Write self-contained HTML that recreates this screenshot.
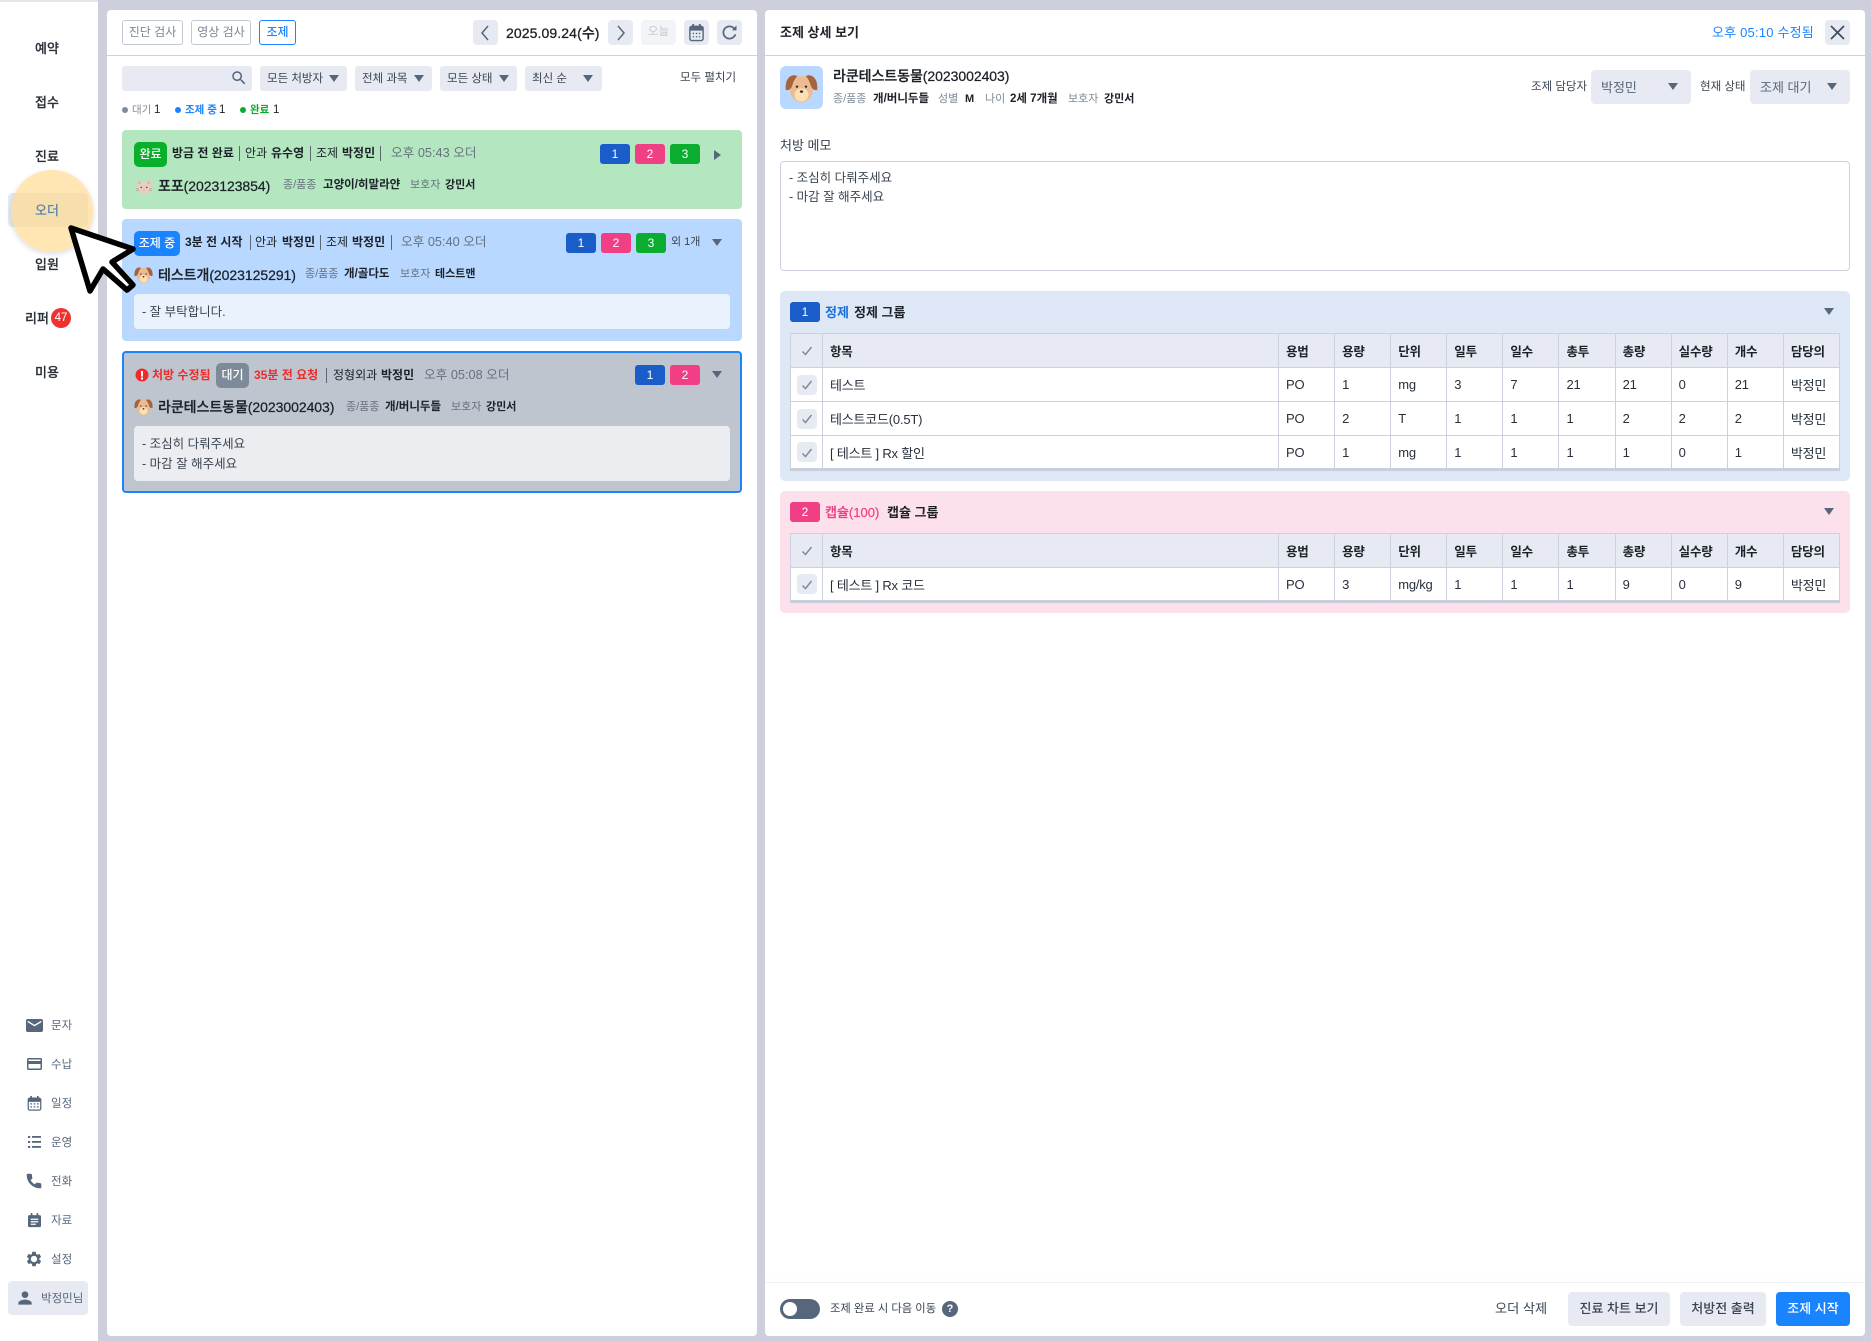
<!DOCTYPE html>
<html lang="ko"><head><meta charset="utf-8"><title>조제</title>
<style>
*{box-sizing:border-box}
html,body{margin:0;padding:0}
body{width:1871px;height:1341px;position:relative;overflow:hidden;background:#cdcfdd;font-family:"Liberation Sans","Noto Sans CJK KR",sans-serif;color:#1c2128;font-size:12px}
.a{position:absolute}
.t{position:absolute;white-space:nowrap;line-height:20px;height:20px;letter-spacing:0}
.b{font-weight:700}
.m{font-weight:500;font-size:14px;letter-spacing:-.05px;-webkit-text-stroke:.25px #1c2128}
.s{font-weight:700;font-size:11.5px}
.h{font-size:12.7px;color:#66717f;letter-spacing:0}
.g{color:#7f8b99}
.k{color:#3a4451}
.c{text-align:center}
.nav{position:absolute;left:0;width:94px;text-align:center;font-size:13px;font-weight:500;line-height:20px;color:#2a3038;-webkit-text-stroke:.2px #2a3038}
.sn{position:absolute;left:51px;font-size:11.5px;line-height:20px;color:#56677b;white-space:nowrap}
.btn{position:absolute;background:#e7eaf2;border-radius:4px}
.ob{position:absolute;top:20px;height:25px;border:1px solid #c4c9d6;border-radius:3px;background:#fff;color:#7b8796;font-size:12px;line-height:23px;text-align:center}
.f{position:absolute;top:66px;height:25px;background:#e7eaf2;border-radius:3px}
.cd{position:absolute;width:0;height:0;border-left:5px solid transparent;border-right:5px solid transparent;border-top:7px solid #56677b}
.card{position:absolute;left:122px;width:620px;border-radius:4px}
.tag{position:absolute;width:30px;height:20px;border-radius:3px;color:#fff;text-align:center;line-height:20px;font-size:12px}
.t1{background:#1a5cc8}.t2{background:#f03f85}.t3{background:#0aad2f}
.bd{position:absolute;border-radius:5px;color:#fff;text-align:center;line-height:25px;height:25px;font-size:12px;font-weight:500;white-space:nowrap}
.sep{position:absolute;width:1px;height:15px;background:#5d6672}
.memo{position:absolute;left:134px;width:596px;border-radius:4px}
table{position:absolute;left:790px;width:1049px;border-collapse:collapse;table-layout:fixed;background:#fff;font-size:13px;color:#27303b;border-bottom:3px solid #c9cedb}
th,td{border:1px solid #cdd1de;height:34px;padding:0 0 0 7px;text-align:left;white-space:nowrap;overflow:hidden;letter-spacing:-.2px}
th{background:#e7eaf2;font-weight:700;font-size:12.5px;color:#1c2128}
th:first-child,td:first-child{padding:0;text-align:center}
th svg,.chk svg{vertical-align:middle;display:inline-block}
.chk{display:inline-block;width:20px;height:20px;background:#e7eaf2;border-radius:4px;vertical-align:middle;padding-top:2px}
.grp{position:absolute;left:780px;width:1070px;border-radius:5px}
</style></head>
<body>
<svg width="0" height="0" style="position:absolute">
<defs>
<symbol id="dog" viewBox="0 0 40 40">
<ellipse cx="20" cy="22" rx="14" ry="16" fill="#edbb93"/><ellipse cx="20" cy="29" rx="8.500" ry="8" fill="#fbe0b4"/>
<path d="M11 5C4 6 0 12 1 23c4 1 7-2 8-6 1-4 3-8 6-11z" fill="#a5643b"/><path d="M29 5c7 1 11 7 10 18-4 1-7-2-8-6-1-4-3-8-6-11z" fill="#a5643b"/>
<circle cx="14.500" cy="19" r="1.500" fill="#3a2a20"/><circle cx="25.500" cy="19" r="1.500" fill="#3a2a20"/><ellipse cx="20" cy="25" rx="2" ry="1.500" fill="#3a2a20"/>
</symbol>
<symbol id="cat" viewBox="0 0 40 40">
<path d="M5 3l9 9h12l9-9 1 28-8 7H12l-8-7z" fill="#e8d0c0"/><path d="M8 8l5 6-5 3zM32 8l-5 6 5 3z" fill="#e9a3a3"/>
<circle cx="14" cy="23" r="1.700" fill="#4a3a34"/><circle cx="26" cy="23" r="1.700" fill="#4a3a34"/><path d="M18 28h4l-2 2z" fill="#d07878"/>
<path d="M2 25l7 2M2 31l7-2M38 25l-7 2M38 31l-7-2" stroke="#8f7d72" stroke-width="1"/>
</symbol>
</defs>
</svg>

<!-- sidebar -->
<div class="a" style="left:0;top:0;width:98px;height:1341px;background:#fff;border-top:2px solid #e4e6ee"></div>
<div class="a" style="left:8px;top:193px;width:80px;height:34px;background:#e7eaf2;border-radius:4px"></div>
<div class="nav" style="top:39px">예약</div>
<div class="nav" style="top:93px">접수</div>
<div class="nav" style="top:147px">진료</div>
<div class="nav" style="top:255px">입원</div>
<div class="nav" style="top:363px">미용</div>
<div class="nav" style="top:309px;left:25px;width:auto">리퍼</div>
<div class="a" style="left:51px;top:308px;width:20px;height:20px;border-radius:50%;background:#ee3232;color:#fff;font-size:11.500px;line-height:20px;text-align:center">47</div>

<svg class="a" style="left:26px;top:1019px" width="17" height="13" viewBox="2 4 20 16" fill="#56677b" preserveAspectRatio="none"><path d="M20 4H4c-1.100 0-2 .9-2 2v12c0 1.100.9 2 2 2h16c1.100 0 2-.9 2-2V6c0-1.100-.9-2-2-2zm0 4l-8 5-8-5V6l8 5 8-5v2z"/></svg>
<div class="sn" style="top:1016px">문자</div>
<svg class="a" style="left:27px;top:1058px" width="15" height="12" viewBox="2 4 20 16" fill="#56677b" preserveAspectRatio="none"><path d="M20 4H4c-1.110 0-1.990.89-1.990 2L2 18c0 1.110.89 2 2 2h16c1.110 0 2-.89 2-2V6c0-1.110-.89-2-2-2zm0 14H4v-6h16v6zm0-10H4V6h16v2z"/></svg>
<div class="sn" style="top:1055px">수납</div>
<svg class="a" style="left:27px;top:1096px" width="15" height="15" viewBox="0 0 18 18"><rect x="1.500" y="2.500" width="15" height="14.500" rx="2" fill="#fff" stroke="#56677b" stroke-width="1.500"/><path d="M1.500 3h15v4h-15zM4 0h2v3H4zM12 0h2v3h-2z" fill="#56677b"/><path d="M4 9.500h2M8 9.500h2M12 9.500h2M4 13h2M8 13h2M12 13h2" stroke="#56677b" stroke-width="1.500"/></svg>
<div class="sn" style="top:1094px">일정</div>
<svg class="a" style="left:27px;top:1135px" width="15" height="14" viewBox="0 0 15 14" fill="#56677b"><rect x="1" y="1" width="2.200" height="2"/><rect x="1" y="6" width="2.200" height="2"/><rect x="1" y="11" width="2.200" height="2"/><rect x="5" y="1" width="9" height="1.800"/><rect x="5" y="6" width="9" height="1.800"/><rect x="5" y="11" width="9" height="1.800"/></svg>
<div class="sn" style="top:1133px">운영</div>
<svg class="a" style="left:25px;top:1172px" width="18" height="18" viewBox="0 0 24 24" fill="#56677b" stroke="#56677b" stroke-width="1.500"><path d="M6.620 10.790c1.440 2.830 3.760 5.140 6.590 6.590l2.200-2.200c.27-.27.67-.36 1.020-.24 1.120.37 2.330.57 3.570.57.55 0 1 .45 1 1V20c0 .55-.45 1-1 1-9.390 0-17-7.610-17-17 0-.55.45-1 1-1h3.500c.55 0 1 .45 1 1 0 1.250.2 2.450.57 3.570.11.35.03.74-.25 1.020l-2.200 2.200z"/></svg>
<div class="sn" style="top:1172px">전화</div>
<svg class="a" style="left:27px;top:1213px" width="15" height="15" viewBox="0 0 18 18"><path d="M3 2.500h12a1.800 1.800 0 0 1 1.800 1.800v11A1.800 1.800 0 0 1 15 17H3a1.800 1.800 0 0 1-1.800-1.700v-11A1.800 1.800 0 0 1 3 2.500zM4.500 0h2v3h-2zM11.500 0h2v3h-2z" fill="#56677b"/><path d="M4.500 7.500h9M4.500 10.500h9M4.500 13.500h6" stroke="#fff" stroke-width="1.400"/></svg>
<div class="sn" style="top:1211px">자료</div>
<svg class="a" style="left:25px;top:1250px" width="18" height="18" viewBox="0 0 24 24" fill="#56677b"><path d="M19.140 12.940c.04-.3.06-.61.06-.94 0-.32-.02-.64-.07-.94l2.030-1.580c.18-.14.23-.41.12-.61l-1.920-3.320c-.12-.22-.37-.29-.59-.22l-2.390.96c-.5-.38-1.030-.7-1.620-.94l-.36-2.540c-.04-.24-.24-.41-.48-.41h-3.840c-.24 0-.43.17-.47.41l-.36 2.540c-.59.24-1.130.57-1.620.94l-2.390-.96c-.22-.08-.47 0-.59.22L2.740 8.870c-.12.21-.08.47.12.61l2.030 1.580c-.05.3-.09.63-.09.94s.02.64.07.94l-2.030 1.580c-.18.14-.23.41-.12.61l1.920 3.320c.12.22.37.29.59.22l2.390-.96c.5.38 1.030.7 1.620.94l.36 2.540c.05.24.24.41.48.41h3.840c.24 0 .44-.17.47-.41l.36-2.540c.59-.24 1.130-.56 1.620-.94l2.390.96c.22.08.47 0 .59-.22l1.920-3.320c.12-.22.07-.47-.12-.61l-2.010-1.580zM12 16.200c-2.300 0-4.200-1.900-4.200-4.200S9.700 7.800 12 7.800s4.200 1.900 4.200 4.200-1.900 4.200-4.200 4.200z"/></svg>
<div class="sn" style="top:1250px">설정</div>
<div class="a" style="left:8px;top:1281px;width:80px;height:34px;background:#e7eaf2;border-radius:4px"></div>
<svg class="a" style="left:15px;top:1288px" width="20" height="20" viewBox="0 0 24 24" fill="#56677b"><path d="M12 12c2.210 0 4-1.790 4-4s-1.790-4-4-4-4 1.790-4 4 1.790 4 4 4zm0 2c-2.670 0-8 1.340-8 4v2h16v-2c0-2.660-5.330-4-8-4z"/></svg>
<div class="sn" style="top:1289px;left:41px">박정민님</div>

<!-- left panel -->
<div class="a" style="left:107px;top:10px;width:650px;height:1326px;background:#fff;border-radius:4px"></div>
<div class="a" style="left:107px;top:55px;width:650px;height:1px;background:#cdd1de"></div>
<div class="ob" style="left:122px;width:61px">진단 검사</div>
<div class="ob" style="left:191px;width:60px">영상 검사</div>
<div class="ob" style="left:259px;width:37px;border-color:#1a84ff;color:#1a84ff;font-weight:500">조제</div>
<div class="btn" style="left:473px;top:20px;width:25px;height:25px"></div>
<svg class="a" style="left:479px;top:25px" width="12" height="16" viewBox="0 0 12 16" fill="none" stroke="#56677b" stroke-width="1.500"><path d="M9 1L3 8l6 7"/></svg>
<div class="t" style="left:506px;top:22px;font-size:14px;font-weight:500;letter-spacing:.1px;line-height:22px;height:22px;-webkit-text-stroke:.3px #1c2128">2025.09.24(수)</div>
<div class="btn" style="left:608px;top:20px;width:25px;height:25px"></div>
<svg class="a" style="left:615px;top:25px" width="12" height="16" viewBox="0 0 12 16" fill="none" stroke="#56677b" stroke-width="1.500"><path d="M3 1l6 7-6 7"/></svg>
<div class="btn c" style="left:641px;top:20px;width:35px;height:25px;background:#f3f4f8;color:#c3c8d1;line-height:25px;font-size:11.500px">오늘</div>
<div class="btn" style="left:684px;top:20px;width:25px;height:25px"></div>
<svg class="a" style="left:688px;top:23px" width="17" height="19" viewBox="0 0 18 19"><rect x="2" y="3" width="14" height="15" rx="2" fill="#e7eaf2" stroke="#56677b" stroke-width="1.500"/><path d="M2 3h14v4.500H2zM4.500 .5h2V3h-2zM11.500 .5h2V3h-2z" fill="#56677b"/><path d="M5 10.500h1.500M8.300 10.500h1.500M11.500 10.500H13M5 14h1.500M8.300 14h1.500M11.500 14H13" stroke="#56677b" stroke-width="1.400"/></svg>
<div class="btn" style="left:717px;top:20px;width:25px;height:25px"></div>
<svg class="a" style="left:719px;top:22px" width="21" height="21" viewBox="0 0 24 24" fill="#56677b"><path d="M17.650 6.350C16.200 4.900 14.210 4 12 4c-4.420 0-7.990 3.580-7.990 8s3.570 8 7.990 8c3.730 0 6.840-2.550 7.730-6h-2.080c-.82 2.330-3.040 4-5.650 4-3.310 0-6-2.690-6-6s2.690-6 6-6c1.660 0 3.140.69 4.220 1.780L15 9.500h5V4l-2.350 2.350z"/></svg>

<div class="f" style="left:122px;width:130px"></div>
<svg class="a" style="left:230px;top:69px" width="18" height="18" viewBox="0 0 24 24" fill="#56677b"><path d="M15.500 14h-.79l-.28-.27C15.410 12.590 16 11.110 16 9.500 16 5.910 13.090 3 9.500 3S3 5.910 3 9.500 5.910 16 9.500 16c1.610 0 3.090-.59 4.230-1.570l.27.28v.79l5 4.990L20.490 19l-4.990-5zm-6 0C7.010 14 5 11.990 5 9.500S7.010 5 9.500 5 14 7.010 14 9.500 11.990 14 9.500 14z"/></svg>
<div class="f" style="left:260px;width:87px"></div><div class="t k" style="left:267px;top:69px;font-size:11.500px">모든 처방자</div><div class="cd" style="left:329px;top:75px"></div>
<div class="f" style="left:355px;width:77px"></div><div class="t k" style="left:362px;top:69px;font-size:11.500px">전체 과목</div><div class="cd" style="left:414px;top:75px"></div>
<div class="f" style="left:440px;width:77px"></div><div class="t k" style="left:447px;top:69px;font-size:11.500px">모든 상태</div><div class="cd" style="left:499px;top:75px"></div>
<div class="f" style="left:525px;width:77px"></div><div class="t k" style="left:532px;top:69px;font-size:11.500px">최신 순</div><div class="cd" style="left:583px;top:75px"></div>
<div class="t k" style="left:680px;top:68px;font-size:11.500px">모두 펼치기</div>

<div class="a" style="left:122px;top:107px;width:6px;height:6px;border-radius:50%;background:#7f8b99"></div>
<div class="t g" style="left:132px;top:100px;font-size:10.500px">대기</div><div class="t" style="left:154px;top:100px;font-size:11.500px">1</div>
<div class="a" style="left:175px;top:107px;width:6px;height:6px;border-radius:50%;background:#1a84ff"></div>
<div class="t b" style="left:185px;top:100px;font-size:10.500px;color:#1a84ff">조제 중</div><div class="t" style="left:219px;top:100px;font-size:11.500px">1</div>
<div class="a" style="left:240px;top:107px;width:6px;height:6px;border-radius:50%;background:#0aad2f"></div>
<div class="t b" style="left:250px;top:100px;font-size:10.500px;color:#0aad2f">완료</div><div class="t" style="left:273px;top:100px;font-size:11.500px">1</div>

<!-- card 1 -->
<div class="card" style="top:130px;height:79px;background:#b4e7c0"></div>
<div class="bd" style="left:134px;top:142px;width:33px;background:#0ab02c">완료</div>
<div class="t b" style="left:172px;top:143px">방금 전 완료</div><div class="sep" style="left:239px;top:146px"></div>
<div class="t" style="left:245px;top:143px">안과</div><div class="t b" style="left:271px;top:143px">유수영</div><div class="sep" style="left:310px;top:146px"></div>
<div class="t" style="left:316px;top:143px">조제</div><div class="t b" style="left:342px;top:143px">박정민</div><div class="sep" style="left:380px;top:146px"></div>
<div class="t h" style="left:391px;top:143px">오후 05:43 오더</div>
<div class="tag t1" style="left:600px;top:144px">1</div><div class="tag t2" style="left:635px;top:144px">2</div><div class="tag t3" style="left:670px;top:144px">3</div>
<div class="a" style="left:714px;top:150px;width:0;height:0;border-top:5px solid transparent;border-bottom:5px solid transparent;border-left:7px solid #56677b"></div>
<svg class="a" style="left:135px;top:177px" width="18" height="18"><use href="#cat"/></svg>
<div class="t m" style="left:158px;top:176px">포포(2023123854)</div>
<div class="t" style="left:283px;top:175px;font-size:11px;color:#66717f">종/품종</div><div class="t s" style="left:323px;top:175px">고양이/히말라얀</div>
<div class="t" style="left:410px;top:175px;font-size:11px;color:#66717f">보호자</div><div class="t b" style="left:445px;top:175px;font-size:11px">강민서</div>

<!-- card 2 -->
<div class="card" style="top:219px;height:122px;background:#b8d8ff"></div>
<div class="bd" style="left:134px;top:231px;width:46px;background:#1a84ff">조제 중</div>
<div class="t b" style="left:185px;top:232px">3분 전 시작</div><div class="sep" style="left:250px;top:235px"></div>
<div class="t" style="left:255px;top:232px">안과</div><div class="t b" style="left:282px;top:232px">박정민</div><div class="sep" style="left:320px;top:235px"></div>
<div class="t" style="left:326px;top:232px">조제</div><div class="t b" style="left:352px;top:232px">박정민</div><div class="sep" style="left:391px;top:235px"></div>
<div class="t h" style="left:401px;top:232px">오후 05:40 오더</div>
<div class="tag t1" style="left:566px;top:233px">1</div><div class="tag t2" style="left:601px;top:233px">2</div><div class="tag t3" style="left:636px;top:233px">3</div>
<div class="t" style="left:671px;top:232px;font-size:11px;color:#3a4451">외 1개</div>
<div class="cd" style="left:712px;top:239px"></div>
<svg class="a" style="left:134px;top:265px" width="19" height="19"><use href="#dog"/></svg>
<div class="t m" style="left:158px;top:265px">테스트개(2023125291)</div>
<div class="t" style="left:305px;top:264px;font-size:11px;color:#66717f">종/품종</div><div class="t s" style="left:344px;top:264px">개/골다도</div>
<div class="t" style="left:400px;top:264px;font-size:11px;color:#66717f">보호자</div><div class="t b" style="left:435px;top:264px;font-size:11px">테스트맨</div>
<div class="memo" style="top:294px;height:35px;background:#eaf2fe"></div>
<div class="t k" style="left:142px;top:302px;font-size:12.500px">- 잘 부탁합니다.</div>

<!-- card 3 -->
<div class="card" style="top:351px;height:142px;background:#bfc5cf;border:2px solid #1a84ff"></div>
<svg class="a" style="left:135px;top:368px" width="14" height="14" viewBox="0 0 14 14"><circle cx="7" cy="7" r="6.500" fill="#ee2b2b"/><rect x="6" y="3" width="2" height="5.500" fill="#fff"/><rect x="6" y="9.500" width="2" height="2" fill="#fff"/></svg>
<div class="t b" style="left:152px;top:365px;color:#ee2b2b">처방 수정됨</div>
<div class="bd" style="left:216px;top:363px;width:33px;background:#7d8a99">대기</div>
<div class="t b" style="left:254px;top:365px;color:#ee2b2b">35분 전 요청</div><div class="sep" style="left:326px;top:368px"></div>
<div class="t" style="left:333px;top:365px">정형외과</div><div class="t b" style="left:381px;top:365px">박정민</div>
<div class="t h" style="left:424px;top:365px">오후 05:08 오더</div>
<div class="tag t1" style="left:635px;top:365px">1</div><div class="tag t2" style="left:670px;top:365px">2</div>
<div class="cd" style="left:712px;top:371px"></div>
<svg class="a" style="left:134px;top:397px" width="19" height="19"><use href="#dog"/></svg>
<div class="t m" style="left:158px;top:397px">라쿤테스트동물(2023002403)</div>
<div class="t" style="left:346px;top:397px;font-size:11px;color:#66717f">종/품종</div><div class="t s" style="left:385px;top:397px">개/버니두들</div>
<div class="t" style="left:451px;top:397px;font-size:11px;color:#66717f">보호자</div><div class="t b" style="left:486px;top:397px;font-size:11px">강민서</div>
<div class="memo" style="top:426px;height:55px;background:#ebedf0"></div>
<div class="t k" style="left:142px;top:434px;font-size:12.500px">- 조심히 다뤄주세요</div>
<div class="t k" style="left:142px;top:454px;font-size:12.500px">- 마감 잘 해주세요</div>

<!-- highlight & cursor -->
<div class="a" style="left:11px;top:170px;width:82px;height:82px;border-radius:50%;background:rgba(255,214,130,.62);box-shadow:0 2px 6px rgba(0,0,0,.15)"></div>
<div class="nav" style="top:201px;color:#5b82ad;-webkit-text-stroke:0">오더</div>
<svg class="a" style="left:60px;top:215px" width="90" height="90" viewBox="60 215 90 90"><path d="M71 228L133 249 112 262 133 285 127 290 103 269 90 291z" fill="#fff" stroke="#000" stroke-width="5.500" stroke-linejoin="round"/></svg>

<!-- right panel -->
<div class="a" style="left:765px;top:10px;width:1100px;height:1326px;background:#fff;border-radius:4px"></div>
<div class="a" style="left:765px;top:55px;width:1100px;height:1px;background:#cdd1de"></div>
<div class="t b" style="left:780px;top:23px;font-size:13px">조제 상세 보기</div>
<div class="t" style="left:1712px;top:23px;color:#1a84ff;font-size:13px;letter-spacing:.2px">오후 05:10 수정됨</div>
<div class="btn" style="left:1825px;top:20px;width:25px;height:25px"></div>
<svg class="a" style="left:1830px;top:25px" width="15" height="15" viewBox="0 0 15 15" stroke="#3d4a5a" stroke-width="1.600"><path d="M1 1l13 13M14 1L1 14"/></svg>

<div class="a" style="left:780px;top:66px;width:43px;height:43px;border-radius:6px;background:#b8d8ff"></div>
<svg class="a" style="left:785px;top:71px" width="33" height="33"><use href="#dog"/></svg>
<div class="t m" style="left:833px;top:66px">라쿤테스트동물(2023002403)</div>
<div class="t g" style="left:833px;top:89px;font-size:11px">종/품종</div><div class="t s" style="left:873px;top:89px">개/버니두들</div>
<div class="t g" style="left:938px;top:89px;font-size:11px">성별</div><div class="t b" style="left:965px;top:89px;font-size:11px">M</div>
<div class="t g" style="left:985px;top:89px;font-size:11px">나이</div><div class="t s" style="left:1010px;top:89px">2세 7개월</div>
<div class="t g" style="left:1068px;top:89px;font-size:11px">보호자</div><div class="t b" style="left:1104px;top:89px;font-size:11px">강민서</div>

<div class="t k" style="left:1531px;top:77px;font-size:11.500px">조제 담당자</div>
<div class="btn" style="left:1591px;top:70px;width:100px;height:34px"></div>
<div class="t" style="left:1601px;top:78px;font-size:13px;color:#56677b">박정민</div><div class="cd" style="left:1668px;top:83px"></div>
<div class="t k" style="left:1700px;top:77px;font-size:11.500px">현재 상태</div>
<div class="btn" style="left:1750px;top:70px;width:100px;height:34px"></div>
<div class="t" style="left:1760px;top:78px;font-size:13px;color:#56677b">조제 대기</div><div class="cd" style="left:1827px;top:83px"></div>

<div class="t k" style="left:780px;top:136px;font-size:13px">처방 메모</div>
<div class="a" style="left:780px;top:161px;width:1070px;height:110px;border:1px solid #cdd1de;border-radius:4px"></div>
<div class="t k" style="left:789px;top:168px;font-size:12.500px">- 조심히 다뤄주세요</div>
<div class="t k" style="left:789px;top:187px;font-size:12.500px">- 마감 잘 해주세요</div>

<!-- group 1 -->
<div class="grp" style="top:291px;height:190px;background:#dee7f6"></div>
<div class="tag t1" style="left:790px;top:302px">1</div>
<div class="t b" style="left:825px;top:303px;color:#1a6fdc;font-size:13px">정제</div>
<div class="t b" style="left:854px;top:303px;font-size:13px">정제 그룹</div>
<div class="cd" style="left:1824px;top:308px"></div>
<table style="top:333px">
<colgroup><col style="width:32px"><col style="width:456px"><col span="10" style="width:56.100px"></colgroup>
<tr><th><svg width="12" height="12" viewBox="0 0 12 12" fill="none" stroke="#7f8b99" stroke-width="1.500"><path d="M1.500 6.500l3 3 6-7.500"/></svg></th><th>항목</th><th>용법</th><th>용량</th><th>단위</th><th>일투</th><th>일수</th><th>총투</th><th>총량</th><th>실수량</th><th>개수</th><th>담당의</th></tr>
<tr><td><span class="chk"><svg width="12" height="12" viewBox="0 0 12 12" fill="none" stroke="#7f8b99" stroke-width="1.500"><path d="M1.500 6.500l3 3 6-7.500"/></svg></span></td><td>테스트</td><td>PO</td><td>1</td><td>mg</td><td>3</td><td>7</td><td>21</td><td>21</td><td>0</td><td>21</td><td>박정민</td></tr>
<tr><td><span class="chk"><svg width="12" height="12" viewBox="0 0 12 12" fill="none" stroke="#7f8b99" stroke-width="1.500"><path d="M1.500 6.500l3 3 6-7.500"/></svg></span></td><td>테스트코드(0.5T)</td><td>PO</td><td>2</td><td>T</td><td>1</td><td>1</td><td>1</td><td>2</td><td>2</td><td>2</td><td>박정민</td></tr>
<tr><td><span class="chk"><svg width="12" height="12" viewBox="0 0 12 12" fill="none" stroke="#7f8b99" stroke-width="1.500"><path d="M1.500 6.500l3 3 6-7.500"/></svg></span></td><td>[ 테스트 ] Rx 할인</td><td>PO</td><td>1</td><td>mg</td><td>1</td><td>1</td><td>1</td><td>1</td><td>0</td><td>1</td><td>박정민</td></tr>
</table>

<!-- group 2 -->
<div class="grp" style="top:491px;height:122px;background:#fce0ec"></div>
<div class="tag t2" style="left:790px;top:502px">2</div>
<div class="t" style="left:825px;top:503px;color:#f03f85;font-size:13px;font-weight:500;-webkit-text-stroke:.2px #f03f85">캡슐(100)</div>
<div class="t b" style="left:887px;top:503px;font-size:13px">캡슐 그룹</div>
<div class="cd" style="left:1824px;top:508px"></div>
<table style="top:533px">
<colgroup><col style="width:32px"><col style="width:456px"><col span="10" style="width:56.100px"></colgroup>
<tr><th><svg width="12" height="12" viewBox="0 0 12 12" fill="none" stroke="#7f8b99" stroke-width="1.500"><path d="M1.500 6.500l3 3 6-7.500"/></svg></th><th>항목</th><th>용법</th><th>용량</th><th>단위</th><th>일투</th><th>일수</th><th>총투</th><th>총량</th><th>실수량</th><th>개수</th><th>담당의</th></tr>
<tr><td><span class="chk"><svg width="12" height="12" viewBox="0 0 12 12" fill="none" stroke="#7f8b99" stroke-width="1.500"><path d="M1.500 6.500l3 3 6-7.500"/></svg></span></td><td>[ 테스트 ] Rx 코드</td><td>PO</td><td>3</td><td>mg/kg</td><td>1</td><td>1</td><td>1</td><td>9</td><td>0</td><td>9</td><td>박정민</td></tr>
</table>

<!-- footer -->
<div class="a" style="left:765px;top:1282px;width:1100px;height:1px;box-shadow:0 -3px 8px rgba(0,0,0,.07);background:#f1f2f5"></div>
<div class="a" style="left:780px;top:1299px;width:40px;height:20px;border-radius:10px;background:#56677b"></div>
<div class="a" style="left:783px;top:1302px;width:14px;height:14px;border-radius:50%;background:#fff"></div>
<div class="t k" style="left:830px;top:1299px;font-size:11.300px">조제 완료 시 다음 이동</div>
<div class="a" style="left:942px;top:1301px;width:16px;height:16px;border-radius:50%;background:#56677b;color:#fff;font-size:11px;font-weight:700;text-align:center;line-height:16px">?</div>
<div class="t k" style="left:1495px;top:1299px;font-size:13.200px">오더 삭제</div>
<div class="btn k c" style="left:1568px;top:1292px;width:102px;height:34px;line-height:34px;font-size:13px;font-weight:500">진료 차트 보기</div>
<div class="btn k c" style="left:1680px;top:1292px;width:86px;height:34px;line-height:34px;font-size:13px;font-weight:500">처방전 출력</div>
<div class="btn c" style="left:1776px;top:1292px;width:74px;height:34px;line-height:34px;font-size:13px;font-weight:500;background:#1a84ff;color:#fff">조제 시작</div>
</body></html>
